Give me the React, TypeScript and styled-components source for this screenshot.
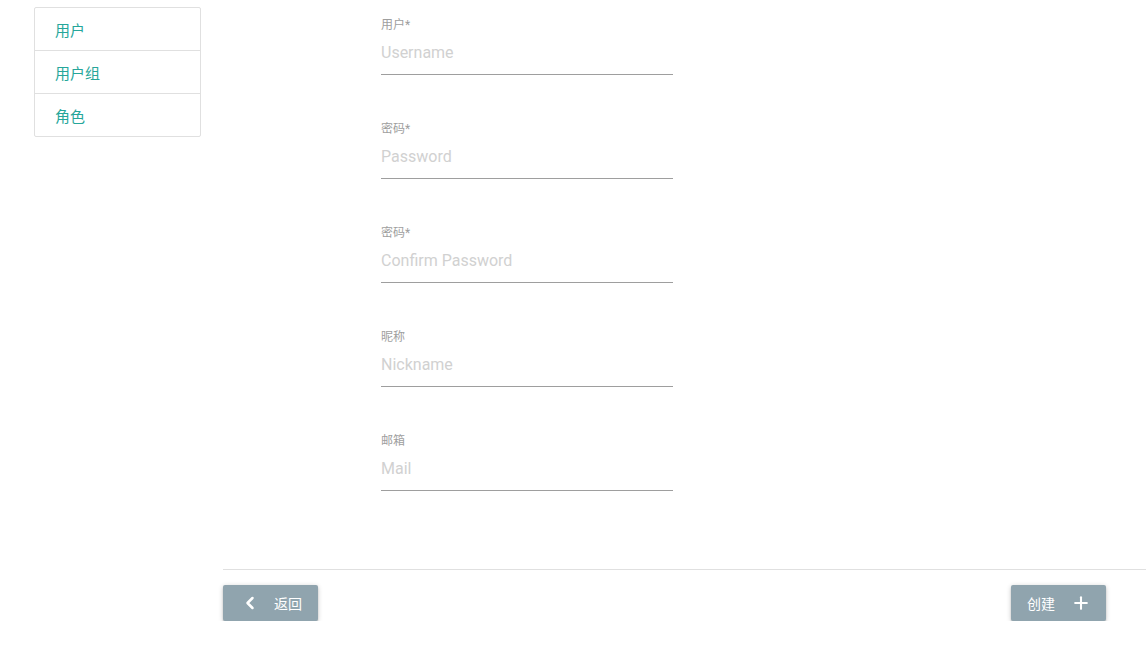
import { createGlobalStyle, styled } from "styled-components";
import { ChevronLeft, Plus } from "lucide-react";

const GlobalStyle = createGlobalStyle`
  html, body {
    margin: 0;
    padding: 0;
    background: #fff;
    font-family: Roboto, "Noto Sans CJK SC", sans-serif;
  }
  * {
    box-sizing: border-box;
  }
`;

const Page = styled.div`
  display: flex;
  align-items: flex-start;
  gap: 22px;
  padding: 7px 2px 0 34px;
`;

const Collection = styled.ul`
  width: 167px;
  margin: 0;
  padding: 0;
  list-style: none;
  border: 1px solid #e0e0e0;
  border-radius: 2px;
`;

const CollectionItem = styled.li`
  height: 42px;
  display: flex;
  align-items: center;
  padding: 0 20px;
  font-size: 15px;
  color: #26a69a;
  & + & {
    height: 43px;
    border-top: 1px solid #e0e0e0;
  }
`;

const Main = styled.main`
  flex: 1;
  margin-top: -7px;
`;

const Form = styled.form`
  padding: 16px 0 78px 158px;
  display: flex;
  flex-direction: column;
  gap: 45px;
`;

const Field = styled.div`
  width: 292px;
  display: flex;
  flex-direction: column;
`;

const Label = styled.label`
  padding-top: 2px;
  font-size: 12px;
  line-height: 14px;
  color: #9e9e9e;
`;

const Input = styled.input`
  height: 43px;
  border: none;
  border-bottom: 1px solid #9e9e9e;
  padding: 0 0 2px;
  font-family: inherit;
  font-size: 16px;
  color: #333;
  outline: none;
  background: transparent;
  &::placeholder {
    color: #d1d1d1;
  }
`;

const Footer = styled.div`
  border-top: 1px solid #e0e0e0;
  padding: 15px 40px 0 0;
  display: flex;
  justify-content: space-between;
`;

const Button = styled.button<{ $iconRight?: boolean }>`
  height: 36px;
  display: flex;
  align-items: center;
  gap: ${(p) => (p.$iconRight ? "16px" : "14px")};
  padding: ${(p) => (p.$iconRight ? "0 15px 0 16px" : "0 16px 0 17px")};
  border: none;
  border-radius: 2px;
  background: #90a4ae;
  color: #fff;
  font-family: inherit;
  font-size: 14px;
  box-shadow: 0 2px 2px 0 rgba(0, 0, 0, 0.14), 0 3px 1px -2px rgba(0, 0, 0, 0.12),
    0 1px 5px 0 rgba(0, 0, 0, 0.2);
  cursor: pointer;
  svg {
    display: block;
  }
`;

const fields = [
  { label: "用户*", placeholder: "Username", type: "text" },
  { label: "密码*", placeholder: "Password", type: "password" },
  { label: "密码*", placeholder: "Confirm Password", type: "password" },
  { label: "昵称", placeholder: "Nickname", type: "text" },
  { label: "邮箱", placeholder: "Mail", type: "text" },
];

export default function App() {
  return (
    <>
      <GlobalStyle />
      <Page>
        <Collection>
          <CollectionItem>用户</CollectionItem>
          <CollectionItem>用户组</CollectionItem>
          <CollectionItem>角色</CollectionItem>
        </Collection>
        <Main>
          <Form onSubmit={(e) => e.preventDefault()}>
            {fields.map((f, i) => (
              <Field key={i}>
                <Label>{f.label}</Label>
                <Input type={f.type} placeholder={f.placeholder} />
              </Field>
            ))}
          </Form>
          <Footer>
            <Button type="button">
              <ChevronLeft size={20} strokeWidth={3} />
              返回
            </Button>
            <Button type="button" $iconRight>
              创建
              <Plus size={20} strokeWidth={2.5} />
            </Button>
          </Footer>
        </Main>
      </Page>
    </>
  );
}
